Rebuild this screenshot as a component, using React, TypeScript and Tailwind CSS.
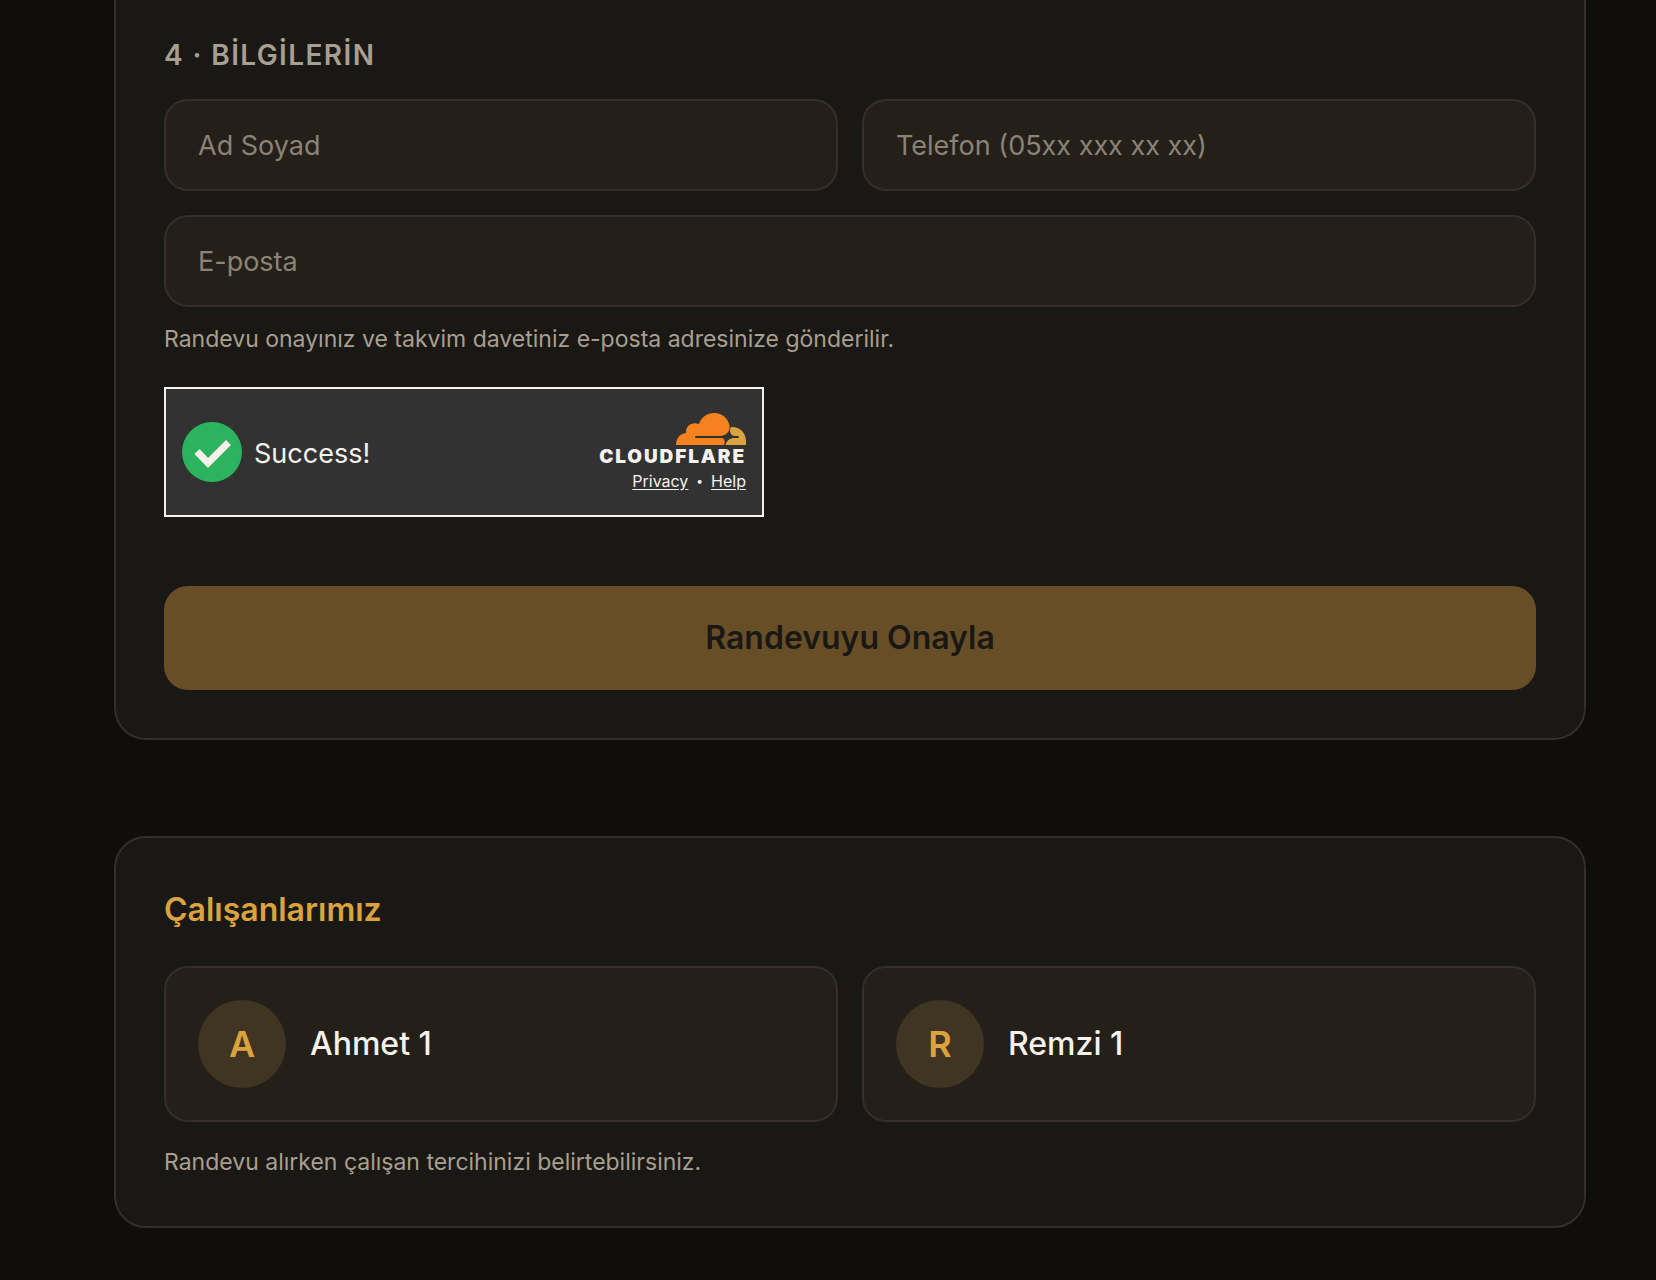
const staff = ['Ahmet 1', 'Remzi 1']

const inputClass =
  'h-[92px] w-full rounded-3xl border-2 border-[#352e2a] bg-[#251f1a] px-8 text-[27px] text-[#f5f2ed] placeholder:text-[#8a8376] outline-none'

function CloudLogo() {
  return (
    <svg viewBox="0 0 70 32" className="h-8 w-[70px]" aria-hidden="true">
      <path
        fill="#f6821f"
        d="M0 32c0-6.500 4-11.500 10-12-.5-7 5.500-11.500 13-9C25.500 4 31 0 38 0c8.500 0 15 6 15.700 14-.2 5-3.500 8.300-8.700 9H20c-1.300 0-1.300 2 0 2h26c2.600.3 3.500 4 2 7z"
      />
      <path
        fill="#dba33f"
        d="M54 18c-.1-2.500.5-4 2-4 8 0 14 6 14 14v4H49.500c1-4.500 4.800-7 9-7H62c1.300 0 1.300-2 0-2h-3c-3 0-4.800-2-5-5z"
      />
    </svg>
  )
}

function Turnstile() {
  return (
    <div className="flex h-[130px] w-[600px] max-w-full items-center justify-between border-2 border-[#f5f2ed] bg-[#323232] px-4 text-[#f5f2ed]">
      <div className="flex items-center gap-3">
        <svg viewBox="0 0 60 60" className="size-[60px]" aria-hidden="true">
          <circle cx="30" cy="30" r="30" fill="#2db35e" />
          <path d="M15 29.500 26 41 46.500 20.500" fill="none" stroke="#f5f2ed" strokeWidth="7" />
        </svg>
        <span className="pt-1 text-[27px]">Success!</span>
      </div>
      <div className="flex flex-col items-end pt-0.5">
        <CloudLogo />
        <span className="mt-1 text-[19px] leading-4 font-black tracking-widest">CLOUDFLARE</span>
        <div className="mt-1 flex items-center gap-2 text-base leading-6">
          <a href="#privacy" className="underline underline-offset-2">Privacy</a>
          <span className="text-xs">•</span>
          <a href="#help" className="underline underline-offset-2">Help</a>
        </div>
      </div>
    </div>
  )
}

export default function App() {
  return (
    <main className="min-h-screen bg-[#0f0e0c] pr-[70px] pb-[52px] pl-[114px] font-[Inter,sans-serif]">
      <form
        className="rounded-b-[32px] border-2 border-t-0 border-[#352e2a] bg-[#1a1814] px-12 pt-[35px] pb-12"
        onSubmit={(e) => e.preventDefault()}
      >
        <h2 className="mb-6 text-[28px] leading-10 font-semibold tracking-wider text-[#a89f91]">
          4 · BİLGİLERİN
        </h2>
        <div className="grid grid-cols-2 gap-6">
          <input type="text" aria-label="Ad Soyad" placeholder="Ad Soyad" className={inputClass} />
          <input type="tel" aria-label="Telefon" placeholder="Telefon (05xx xxx xx xx)" className={inputClass} />
          <div className="col-span-2">
            <input type="email" aria-label="E-posta" placeholder="E-posta" className={inputClass} />
          </div>
        </div>
        <p className="mt-4 mb-8 text-[23px] leading-8 text-[#a89f91]">
          Randevu onayınız ve takvim davetiniz e-posta adresinize gönderilir.
        </p>
        <Turnstile />
        <button
          type="submit"
          className="mt-[69px] h-[104px] w-full rounded-3xl bg-[#684e27] text-[32px] font-semibold text-[#1a1814]"
        >
          Randevuyu Onayla
        </button>
      </form>

      <section className="mt-24 rounded-[32px] border-2 border-[#352e2a] bg-[#1a1814] p-12">
        <h2 className="text-[32px] leading-[48px] font-semibold text-[#dba33f]">Çalışanlarımız</h2>
        <ul className="mt-8 grid grid-cols-2 gap-6">
          {staff.map((name) => (
            <li
              key={name}
              className="flex items-center gap-6 rounded-3xl border-2 border-[#352e2a] bg-[#251f1a] p-8"
            >
              <div className="flex size-[88px] items-center justify-center rounded-full bg-[#403423] text-4xl font-semibold text-[#dba33f]">
                {name[0]}
              </div>
              <span className="text-[32px] font-medium text-[#f5f2ed]">{name}</span>
            </li>
          ))}
        </ul>
        <p className="mt-6 text-[23px] leading-8 text-[#a89f91]">
          Randevu alırken çalışan tercihinizi belirtebilirsiniz.
        </p>
      </section>
    </main>
  )
}
